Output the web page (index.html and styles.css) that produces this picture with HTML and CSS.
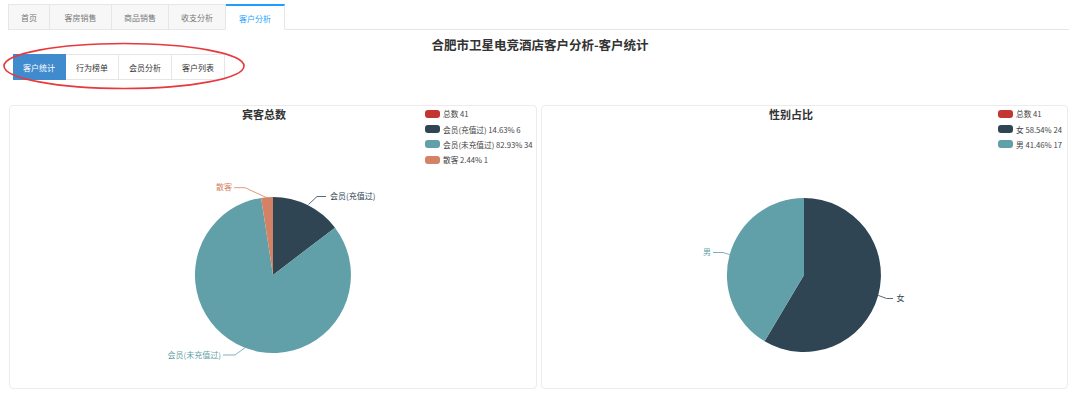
FILE: index.html
```html
<!DOCTYPE html>
<html lang="zh-CN">
<head>
  <meta charset="UTF-8">
  <title>客户分析</title>
  <link rel="stylesheet" href="styles.css">
</head>
<body>

<ul class="tabs">
  <li class="tab">首页</li>
  <li class="tab">客房销售</li>
  <li class="tab">商品销售</li>
  <li class="tab">收支分析</li>
  <li class="tab active">客户分析</li>
</ul>

<h2 class="page-title">合肥市卫星电竞酒店客户分析-客户统计</h2>

<div class="subnav">
  <span class="sub-btn active">客户统计</span>
  <span class="sub-btn">行为榜单</span>
  <span class="sub-btn">会员分析</span>
  <span class="sub-btn">客户列表</span>
  <svg class="mark" width="245" height="50" viewBox="0 0 245 50">
    <ellipse cx="122" cy="24" rx="120" ry="22.5" fill="none" stroke="#e8383d" stroke-width="1.6"/>
  </svg>
</div>

<div class="charts">
  <div class="panel">
    <div class="chart-title">宾客总数</div>
    <ul class="legend legend-guest">
      <li><i class="sw red"></i>总数 41</li>
      <li><i class="sw dark"></i>会员(充值过) 14.63% 6</li>
      <li><i class="sw teal"></i>会员(未充值过) 82.93% 34</li>
      <li><i class="sw orange"></i>散客 2.44% 1</li>
    </ul>
    <svg class="pie" viewBox="0 0 528 284">
      <path d="M264 170 L264 92 A78 78 0 0 1 326 122.7 Z" fill="#2f4554"/>
      <path d="M264 170 L326 122.7 A78 78 0 1 1 252.1 92.9 Z" fill="#61a0a8"/>
      <path d="M264 170 L252.1 92.9 A78 78 0 0 1 264 92 Z" fill="#d48265"/>

      <polyline points="299.5,99.5 308,91.5 317,91.5" fill="none" stroke="#2f4554" stroke-width="0.8"/>
      <text x="321" y="92" class="lbl" fill="#2f4554">会员(充值过)</text>

      <polyline points="257.7,92.7 236,82.7 225,82.7" fill="none" stroke="#d48265" stroke-width="0.8"/>
      <text x="223" y="83" class="lbl" text-anchor="end" fill="#d48265">散客</text>

      <polyline points="236,242.7 226,250 214,250" fill="none" stroke="#61a0a8" stroke-width="0.8"/>
      <text x="212" y="250.5" class="lbl" text-anchor="end" fill="#61a0a8">会员(未充值过)</text>
    </svg>
  </div>

  <div class="panel">
    <div class="chart-title shift">性别占比</div>
    <ul class="legend legend-gender">
      <li><i class="sw red"></i>总数 41</li>
      <li><i class="sw dark"></i>女 58.54% 24</li>
      <li><i class="sw teal"></i>男 41.46% 17</li>
    </ul>
    <svg class="pie" viewBox="0 0 526 284">
      <path d="M263 170 L263 93 A77 77 0 1 1 223.6 236.2 Z" fill="#2f4554"/>
      <path d="M263 170 L223.6 236.2 A77 77 0 0 1 263 93 Z" fill="#61a0a8"/>

      <polyline points="337.2,190.4 345.7,193.5 352,193.5" fill="none" stroke="#2f4554" stroke-width="0.8"/>
      <text x="355.5" y="194" class="lbl" fill="#2f4554">女</text>

      <polyline points="188.8,149.6 182,147.5 172,147.5" fill="none" stroke="#61a0a8" stroke-width="0.8"/>
      <text x="170" y="148" class="lbl" text-anchor="end" fill="#61a0a8">男</text>
    </svg>
  </div>
</div>

</body>
</html>
```

FILE: styles.css
```css
* {
  margin: 0;
  padding: 0;
  box-sizing: border-box;
}

html, body {
  height: 100%;
  background: #fff;
  font-family: "Noto Sans CJK SC", "Noto Sans", sans-serif;
  color: #333;
  overflow: hidden;
}

.tabs {
  list-style: none;
  display: flex;
  margin: 4px 11px 0 8px;
  height: 26px;
  border-bottom: 1px solid #e6e6e6;
}

.tab {
  height: 26px;
  line-height: 25px;
  padding: 0 12px;
  font-size: 8px;
  color: #777;
  background: #f7f7f7;
  border: 1px solid #e6e6e6;
  border-left: none;
  white-space: nowrap;
}

.tab:first-child {
  border-left: 1px solid #e6e6e6;
}

.tab:nth-child(2) {
  padding: 0 14.5px;
}

.tab.active {
  padding: 0 13px;
  background: #fff;
  color: #1e9fff;
  border-top: 2px solid #1e9fff;
  border-bottom-color: #fff;
}

.page-title {
  margin-top: 7px;
  text-align: center;
  font-size: 12.5px;
  line-height: 16px;
  font-weight: bold;
  color: #333;
}

.subnav {
  position: relative;
  display: flex;
  margin: 1px 0 0 13px;
}

.sub-btn {
  width: 53px;
  height: 26px;
  line-height: 25px;
  text-align: center;
  font-size: 8px;
  color: #333;
  background: #fff;
  border: 1px solid #e6e6e6;
  border-left: none;
}

.sub-btn.active {
  background: #3f8bcd;
  border-color: #3f8bcd;
  color: #fff;
}

.mark {
  position: absolute;
  left: -11px;
  top: -12px;
}

.charts {
  display: flex;
  gap: 4px;
  margin: 25px 0 0 9px;
}

.panel {
  position: relative;
  width: 528px;
  height: 284px;
  border: 1px solid #ececec;
  border-radius: 4px;
}

.panel + .panel {
  width: 527px;
}

.chart-title {
  padding: 1px 18px 0 0;
  text-align: center;
  font-size: 11px;
  line-height: 15px;
  font-weight: bold;
  color: #333;
}

.chart-title.shift {
  padding-right: 27px;
}

.legend {
  position: absolute;
  top: 0;
  list-style: none;
  font-size: 7.7px;
  color: #444;
}

.legend-guest {
  left: 415px;
}

.legend-gender {
  left: 456px;
}

.legend li {
  display: flex;
  align-items: center;
  height: 15.4px;
  white-space: nowrap;
}

.sw {
  display: inline-block;
  width: 15px;
  height: 8px;
  border-radius: 3px;
  margin-right: 3px;
}

.red { background: #c23531; }
.dark { background: #2f4554; }
.teal { background: #61a0a8; }
.orange { background: #d48265; }

.pie {
  position: absolute;
  left: -1px;
  top: -1px;
  width: 528px;
  height: 284px;
  pointer-events: none;
}

.panel + .panel .pie {
  width: 526px;
}

.lbl {
  font-size: 8px;
  dominant-baseline: middle;
  font-family: "Noto Sans CJK SC", sans-serif;
}
```
